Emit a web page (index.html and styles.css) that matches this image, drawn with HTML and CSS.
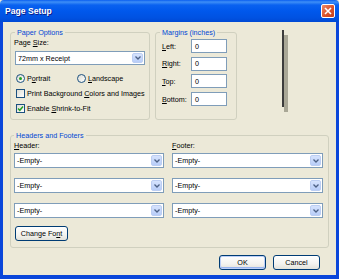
FILE: index.html
```html
<!DOCTYPE html>
<html lang="en">
<head>
    <meta charset="UTF-8">
    <title>Page Setup</title>
    <link rel="stylesheet" href="styles.css">
</head>
<body>
    <div class="window">
        <div class="titlebar">
            <span class="title">Page Setup</span>
            <span class="close">
                <svg width="8" height="8" viewBox="0 0 8 8"><path d="M1 1 L7 7 M7 1 L1 7" stroke="#fff" stroke-width="1.6"/></svg>
            </span>
        </div>
        <div class="body">
            <div class="top-row">
                <fieldset class="group paper">
                    <legend>Paper Options</legend>
                    <div class="label">Page <u>S</u>ize:</div>
                    <div class="combo">
                        <span class="combo-text">72mm x Receipt</span>
                        <span class="arrow"><svg width="6" height="4" viewBox="0 0 6 4"><path d="M0.5 0.5 L3 3 L5.5 0.5" fill="none" stroke="#4d6185" stroke-width="1.3"/></svg></span>
                    </div>
                    <div class="opt-row">
                        <span class="opt portrait"><span class="radio checked"></span><span>P<u>o</u>rtrait</span></span>
                        <span class="opt"><span class="radio"></span><span><u>L</u>andscape</span></span>
                    </div>
                    <div class="opt-row">
                        <span class="opt"><span class="check"></span><span>Print Background <u>C</u>olors and Images</span></span>
                    </div>
                    <div class="opt-row">
                        <span class="opt"><span class="check"><svg width="7" height="7" viewBox="0 0 7 7"><path d="M1 3.5 L2.8 5.3 L6 1.5" fill="none" stroke="#21a121" stroke-width="1.5"/></svg></span><span>Enable <u>S</u>hrink-to-Fit</span></span>
                    </div>
                </fieldset>

                <fieldset class="group margins">
                    <legend>Margins (inches)</legend>
                    <div class="margin-row"><span class="mlabel"><u>L</u>eft:</span><span class="field">0</span></div>
                    <div class="margin-row"><span class="mlabel"><u>R</u>ight:</span><span class="field">0</span></div>
                    <div class="margin-row"><span class="mlabel"><u>T</u>op:</span><span class="field">0</span></div>
                    <div class="margin-row"><span class="mlabel"><u>B</u>ottom:</span><span class="field">0</span></div>
                </fieldset>

                <div class="preview">
                    <div class="page-edge"></div>
                    <div class="page-shadow"></div>
                </div>
            </div>

            <fieldset class="group headers">
                <legend>Headers and Footers</legend>
                <div class="hf-grid">
                    <div class="label"><u>H</u>eader:</div>
                    <div class="label"><u>F</u>ooter:</div>

                    <div class="combo"><span class="combo-text">-Empty-</span><span class="arrow"><svg width="6" height="4" viewBox="0 0 6 4"><path d="M0.5 0.5 L3 3 L5.5 0.5" fill="none" stroke="#4d6185" stroke-width="1.3"/></svg></span></div>
                    <div class="combo"><span class="combo-text">-Empty-</span><span class="arrow"><svg width="6" height="4" viewBox="0 0 6 4"><path d="M0.5 0.5 L3 3 L5.5 0.5" fill="none" stroke="#4d6185" stroke-width="1.3"/></svg></span></div>

                    <div class="combo"><span class="combo-text">-Empty-</span><span class="arrow"><svg width="6" height="4" viewBox="0 0 6 4"><path d="M0.5 0.5 L3 3 L5.5 0.5" fill="none" stroke="#4d6185" stroke-width="1.3"/></svg></span></div>
                    <div class="combo"><span class="combo-text">-Empty-</span><span class="arrow"><svg width="6" height="4" viewBox="0 0 6 4"><path d="M0.5 0.5 L3 3 L5.5 0.5" fill="none" stroke="#4d6185" stroke-width="1.3"/></svg></span></div>

                    <div class="combo"><span class="combo-text">-Empty-</span><span class="arrow"><svg width="6" height="4" viewBox="0 0 6 4"><path d="M0.5 0.5 L3 3 L5.5 0.5" fill="none" stroke="#4d6185" stroke-width="1.3"/></svg></span></div>
                    <div class="combo"><span class="combo-text">-Empty-</span><span class="arrow"><svg width="6" height="4" viewBox="0 0 6 4"><path d="M0.5 0.5 L3 3 L5.5 0.5" fill="none" stroke="#4d6185" stroke-width="1.3"/></svg></span></div>
                </div>
                <button class="btn font-btn">Change Fo<u>n</u>t</button>
            </fieldset>

            <div class="actions">
                <button class="btn default">OK</button>
                <button class="btn">Cancel</button>
            </div>
        </div>
    </div>
</body>
</html>
```

FILE: styles.css
```css
body {
    margin: 0;
    padding: 0;
    font-family: "Liberation Sans", Arial, sans-serif;
    font-size: 7.2px;
    color: #000;
    background: #ece9d8;
}

.window {
    width: 339px;
    height: 279px;
    display: flex;
    flex-direction: column;
    background: #ece9d8;
}

.titlebar {
    height: 22px;
    flex: none;
    display: flex;
    align-items: center;
    justify-content: space-between;
    padding: 0 4px 0 5px;
    background: linear-gradient(#0a5ef0 0, #3e8ff7 2px, #0a62f0 5px, #0058ec 50%, #0052e2 80%, #0049d4 100%);
    border-radius: 4px 4px 0 0;
}

.title {
    color: #fff;
    font-weight: bold;
    font-size: 8.6px;
    text-shadow: 1px 1px 0 #0a1e8a;
}

.close {
    width: 14px;
    height: 14px;
    box-sizing: border-box;
    border: 1px solid #fff;
    border-radius: 2px;
    background: linear-gradient(135deg, #ee8a68, #d9522c 55%, #c2401c);
    display: flex;
    align-items: center;
    justify-content: center;
}

.body {
    flex: 1;
    border-left: 3px solid #0a46da;
    border-right: 3px solid #0a46da;
    border-bottom: 4px solid #0a46da;
    padding: 6px 7px 0 7px;
}

.top-row {
    display: flex;
    align-items: flex-start;
}

.group {
    margin: 0;
    padding: 0 4px 0 4px;
    border: 1px solid #d0d0bf;
    border-radius: 3px;
    box-sizing: border-box;
}

.group legend {
    padding: 0 2px;
    color: #0046d5;
    line-height: 9px;
}

.paper {
    width: 140px;
    height: 92px;
}

.margins {
    width: 82px;
    height: 92px;
    margin-left: 5px;
}

.label {
    line-height: 10px;
    height: 10px;
    margin-top: 1px;
}

.paper .label {
    margin-left: -1px;
}

.combo {
    height: 14px;
    box-sizing: border-box;
    border: 1px solid #7f9db9;
    background: #fff;
    display: flex;
    align-items: stretch;
    margin-top: 3px;
}

.combo-text {
    flex: 1;
    padding-left: 2px;
    display: flex;
    align-items: center;
    white-space: nowrap;
}

.arrow {
    width: 11px;
    margin: 1px;
    border-radius: 2px;
    background: linear-gradient(#d6e3fd, #b8cdf8);
    border: 1px solid #bccef3;
    box-sizing: border-box;
    display: flex;
    align-items: center;
    justify-content: center;
}

.opt-row {
    height: 15px;
    display: flex;
    align-items: center;
}

.combo + .opt-row {
    margin-top: 6px;
}

.opt {
    display: flex;
    align-items: center;
    white-space: nowrap;
    padding-left: 1px;
}

.portrait {
    width: 60px;
}

.radio {
    width: 9px;
    height: 9px;
    box-sizing: border-box;
    border: 1px solid #1c5180;
    border-radius: 50%;
    background: linear-gradient(135deg, #dcdcd4, #fff);
    margin-right: 2px;
    display: flex;
    align-items: center;
    justify-content: center;
}

.radio.checked::after {
    content: "";
    width: 3px;
    height: 3px;
    border-radius: 50%;
    background: #21a121;
}

.check {
    width: 9px;
    height: 9px;
    box-sizing: border-box;
    border: 1px solid #1c5180;
    background: linear-gradient(135deg, #dcdcd4, #fff);
    margin-right: 2px;
    display: flex;
    align-items: center;
    justify-content: center;
}

.margin-row {
    display: flex;
    align-items: center;
    margin-top: 3.7px;
}

.margin-row:first-of-type {
    margin-top: 2px;
}

.mlabel {
    width: 29px;
    padding-left: 2px;
}

.field {
    width: 36px;
    height: 14px;
    box-sizing: border-box;
    border: 1px solid #7f9db9;
    background: #fff;
    padding-left: 3px;
    display: flex;
    align-items: center;
}

.preview {
    display: flex;
    align-items: flex-start;
    margin-left: 45px;
    margin-top: 2px;
}

.page-edge {
    width: 2px;
    height: 77px;
    background: #3c3c3c;
}

.page-shadow {
    width: 4px;
    height: 77px;
    margin-top: 5px;
    background: #a9a796;
}

.headers {
    width: 319px;
    height: 117px;
    margin-top: 11px;
    padding-left: 3px;
}

.hf-grid {
    display: grid;
    grid-template-columns: 150px 151px;
    column-gap: 8px;
    row-gap: 10px;
}

.hf-grid .label {
    margin-top: 1px;
    margin-bottom: -8px;
}

.hf-grid .combo {
    height: 15px;
    margin-top: 0;
}

.btn {
    font-family: "Liberation Sans", Arial, sans-serif;
    font-size: 7.2px;
    color: #000;
    height: 15px;
    padding: 0;
    border: 1px solid #003c74;
    border-radius: 3px;
    background: linear-gradient(#ffffff, #f3f3ef 60%, #e3e2da);
    box-sizing: border-box;
}

.font-btn {
    width: 53px;
    margin-top: 8px;
    margin-left: 1px;
}

.actions {
    display: flex;
    justify-content: flex-end;
    gap: 7px;
    margin-top: 7px;
    padding-right: 9px;
}

.actions .btn {
    width: 47px;
}

.btn.default {
    box-shadow: inset 0 0 0 1px #bccff7, inset 0 -1px 0 1px #98b4ee;
}
```
